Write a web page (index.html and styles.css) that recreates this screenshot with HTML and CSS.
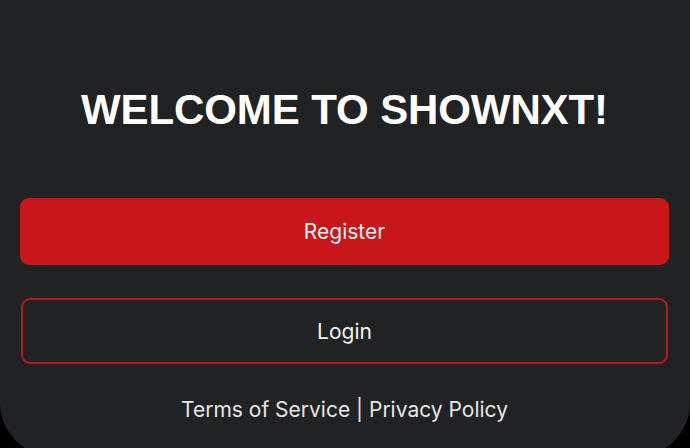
FILE: index.html
```html
<!DOCTYPE html>
<html lang="en">
<head>
<meta charset="utf-8">
<title>Welcome</title>
<link rel="stylesheet" href="styles.css">
</head>
<body>
<main class="screen">
  <h1 class="title">WELCOME TO SHOWNXT!</h1>
  <button class="btn btn-primary">Register</button>
  <button class="btn btn-outline">Login</button>
  <p class="legal">Terms of Service | Privacy Policy</p>
</main>
</body>
</html>
```
FILE: styles.css
```css
html, body {
  margin: 0;
  padding: 0;
  height: 448px;
  overflow: hidden;
  background: #000;
}
.screen {
  box-sizing: border-box;
  height: 456px;
  background: #212224;
  border-radius: 0 0 53px 53px;
  padding: 89px 21px 0 20px;
  display: flex;
  flex-direction: column;
  font-family: Inter, "Noto Sans", sans-serif;
}
.title {
  margin: 0;
  font-family: "Liberation Sans", Arial, sans-serif;
  font-weight: 700;
  font-size: 42px;
  line-height: 42px;
  color: #fff;
  text-align: center;
  letter-spacing: -0.1px;
}
.btn {
  box-sizing: border-box;
  width: 100%;
  font-family: Inter, "Noto Sans", sans-serif;
  font-size: 21px;
  color: #f2f2f2;
  border-radius: 9px;
  cursor: pointer;
}
.btn-primary {
  margin-top: 67px;
  height: 67px;
  background: #c8161a;
  border: none;
}
.btn-outline {
  margin: 33px 1px 0;
  width: calc(100% - 2px);
  height: 66px;
  background: transparent;
  border: 2px solid #b81a1e;
}
.legal {
  margin: 34px 0 0;
  font-size: 21px;
  line-height: 24px;
  color: #e6e6e6;
  text-align: center;
}
```
